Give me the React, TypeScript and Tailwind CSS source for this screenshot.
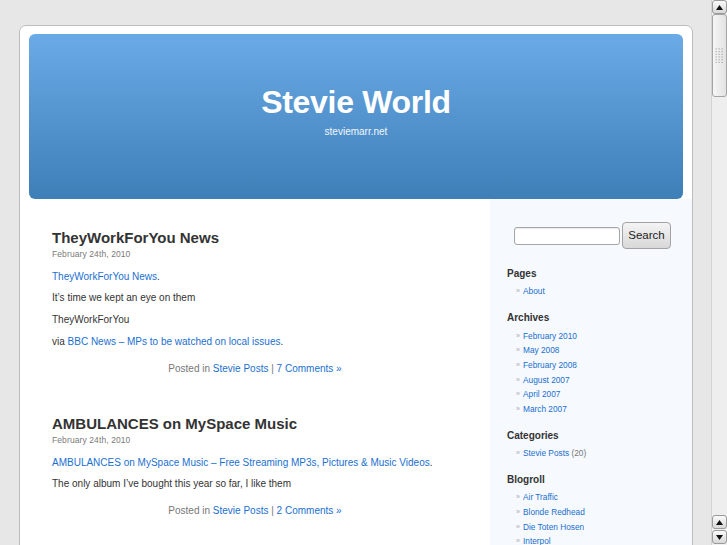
import React from "react";

const LINK = "text-[#1a6fcf]";

function Post({
  title,
  date,
  paras,
  comments,
}: {
  title: string;
  date: string;
  paras: React.ReactNode[];
  comments: string;
}) {
  return (
    <div>
      <h2 className="text-[15px] font-bold leading-[18px] text-[#333]">{title}</h2>
      <div className="mt-[1px] text-[8.5px] leading-[12px] tracking-[0.1px] text-[#7a7a7a]">{date}</div>
      <div className="mt-[10px] flex flex-col gap-[7.7px] text-[10px] leading-[14px] text-[#333]">
        {paras.map((p, i) => (
          <p key={i}>{p}</p>
        ))}
      </div>
      <p className="mt-[13px] text-center text-[10px] leading-[14px] text-[#777]">
        Posted in <span className={LINK}>Stevie Posts</span> | <span className={LINK}>{comments}</span>
      </p>
    </div>
  );
}

function SideList({ items }: { items: React.ReactNode[] }) {
  return (
    <ul className="mt-[4.4px] pl-[9px]">
      {items.map((it, i) => (
        <li key={i} className="flex items-center text-[8.3px] leading-[14.6px]">
          <span className="w-[7px] text-[7px] text-[#aaa]">»</span>
          <span className={LINK}>{it}</span>
        </li>
      ))}
    </ul>
  );
}

function SideHeading({ children, className = "" }: { children: React.ReactNode; className?: string }) {
  return <h2 className={"text-[10px] font-bold leading-[12px] text-[#333] " + className}>{children}</h2>;
}

function Arrow({ up }: { up: boolean }) {
  return (
    <svg width="7" height="5" viewBox="0 0 7 5">
      {up ? <polygon points="3.5,0 7,5 0,5" fill="#111" /> : <polygon points="0,0 7,0 3.5,5" fill="#111" />}
    </svg>
  );
}

function ScrollButton({ up }: { up: boolean }) {
  return (
    <div className="flex h-[14px] w-[15px] items-center justify-center rounded-[3px] border border-[#9a9a9a] bg-gradient-to-b from-[#fafafa] to-[#d8d8d8]">
      <Arrow up={up} />
    </div>
  );
}

function Scrollbar() {
  return (
    <div className="flex h-[545px] w-[16px] flex-col border-l border-[#d4d4d4] bg-[#f1f1f1]">
      <ScrollButton up />
      <div className="flex h-[83px] w-[15px] items-center justify-center rounded-[3px] border border-[#a4a4a4] bg-gradient-to-r from-[#f6f6f6] to-[#e2e2e2]">
        <svg width="9" height="16" viewBox="0 0 9 16">
          {[0, 1, 2, 3, 4, 5].map((r) =>
            [0, 1, 2].map((c) => (
              <rect key={r + "-" + c} x={c * 3 + 0.5} y={r * 2.7 + 0.3} width="1.2" height="1.2" fill="#a8a8a8" />
            ))
          )}
        </svg>
      </div>
      <div className="flex-1 bg-[#eeeeee]" />
      <div className="mb-[1px]">
        <ScrollButton up />
      </div>
      <div className="mb-[1px]">
        <ScrollButton up={false} />
      </div>
    </div>
  );
}

export default function App() {
  return (
    <div className="flex h-[545px] w-[727px] overflow-hidden bg-[#e7e7e7] font-['Liberation_Sans',Arial,sans-serif]">
      <div className="w-[711px] shrink-0">
        <div className="ml-[19px] mt-[25px] h-[560px] w-[674px] rounded-t-[7px] border border-[#bdbdbd] bg-white">
          <div className="px-[9px] pt-[8px]">
            <div className="flex h-[165px] flex-col items-center rounded-[6px] bg-gradient-to-b from-[#6aaae6] to-[#3f7fb8] pt-[52px]">
              <h1 className="text-[32px] font-bold leading-[32px] tracking-[-0.3px] text-white">Stevie World</h1>
              <div className="mt-[7.5px] text-[10px] leading-[12px] text-[#f2f6fb]">steviemarr.net</div>
            </div>
          </div>
          <div className="flex h-full">
            <div className="w-[470px] shrink-0 px-[32px] pt-[29.5px]">
              <Post
                title="TheyWorkForYou News"
                date="February 24th, 2010"
                paras={[
                  <>
                    <span className={LINK}>TheyWorkForYou News</span>.
                  </>,
                  "It’s time we kept an eye on them",
                  "TheyWorkForYou",
                  <>
                    via <span className={LINK}>BBC News – MPs to be watched on local issues</span>.
                  </>,
                ]}
                comments="7 Comments »"
              />
              <div className="mt-[39px]">
                <Post
                  title="AMBULANCES on MySpace Music"
                  date="February 24th, 2010"
                  paras={[
                    <>
                      <span className={LINK}>
                        AMBULANCES on MySpace Music – Free Streaming MP3s, Pictures &amp; Music Videos
                      </span>
                      .
                    </>,
                    "The only album I’ve bought this year so far, I like them",
                  ]}
                  comments="2 Comments »"
                />
              </div>
            </div>
            <div className="flex-1 bg-[#f6f9fd] pl-[17px] pt-[23px]">
              <div className="flex items-center pl-[7px]">
                <input
                  type="text"
                  className="h-[18px] w-[106px] rounded-[3px] border border-[#a6a6a6] bg-white shadow-[inset_0_1px_1px_rgba(0,0,0,0.08)] outline-none"
                />
                <button className="ml-[2px] h-[27px] w-[49px] rounded-[4px] border border-[#a3a3a3] bg-gradient-to-b from-[#f4f4f4] to-[#d8d8d8] text-[11.5px] text-[#222]">
                  Search
                </button>
              </div>
              <SideHeading className="mt-[19px]">Pages</SideHeading>
              <SideList items={["About"]} />
              <SideHeading className="mt-[13.4px]">Archives</SideHeading>
              <SideList
                items={["February 2010", "May 2008", "February 2008", "August 2007", "April 2007", "March 2007"]}
              />
              <SideHeading className="mt-[13.4px]">Categories</SideHeading>
              <SideList
                items={[
                  <>
                    Stevie Posts <span className="text-[#777]">(20)</span>
                  </>,
                ]}
              />
              <SideHeading className="mt-[13.4px]">Blogroll</SideHeading>
              <SideList items={["Air Traffic", "Blonde Redhead", "Die Toten Hosen", "Interpol"]} />
            </div>
          </div>
        </div>
      </div>
      <Scrollbar />
    </div>
  );
}
